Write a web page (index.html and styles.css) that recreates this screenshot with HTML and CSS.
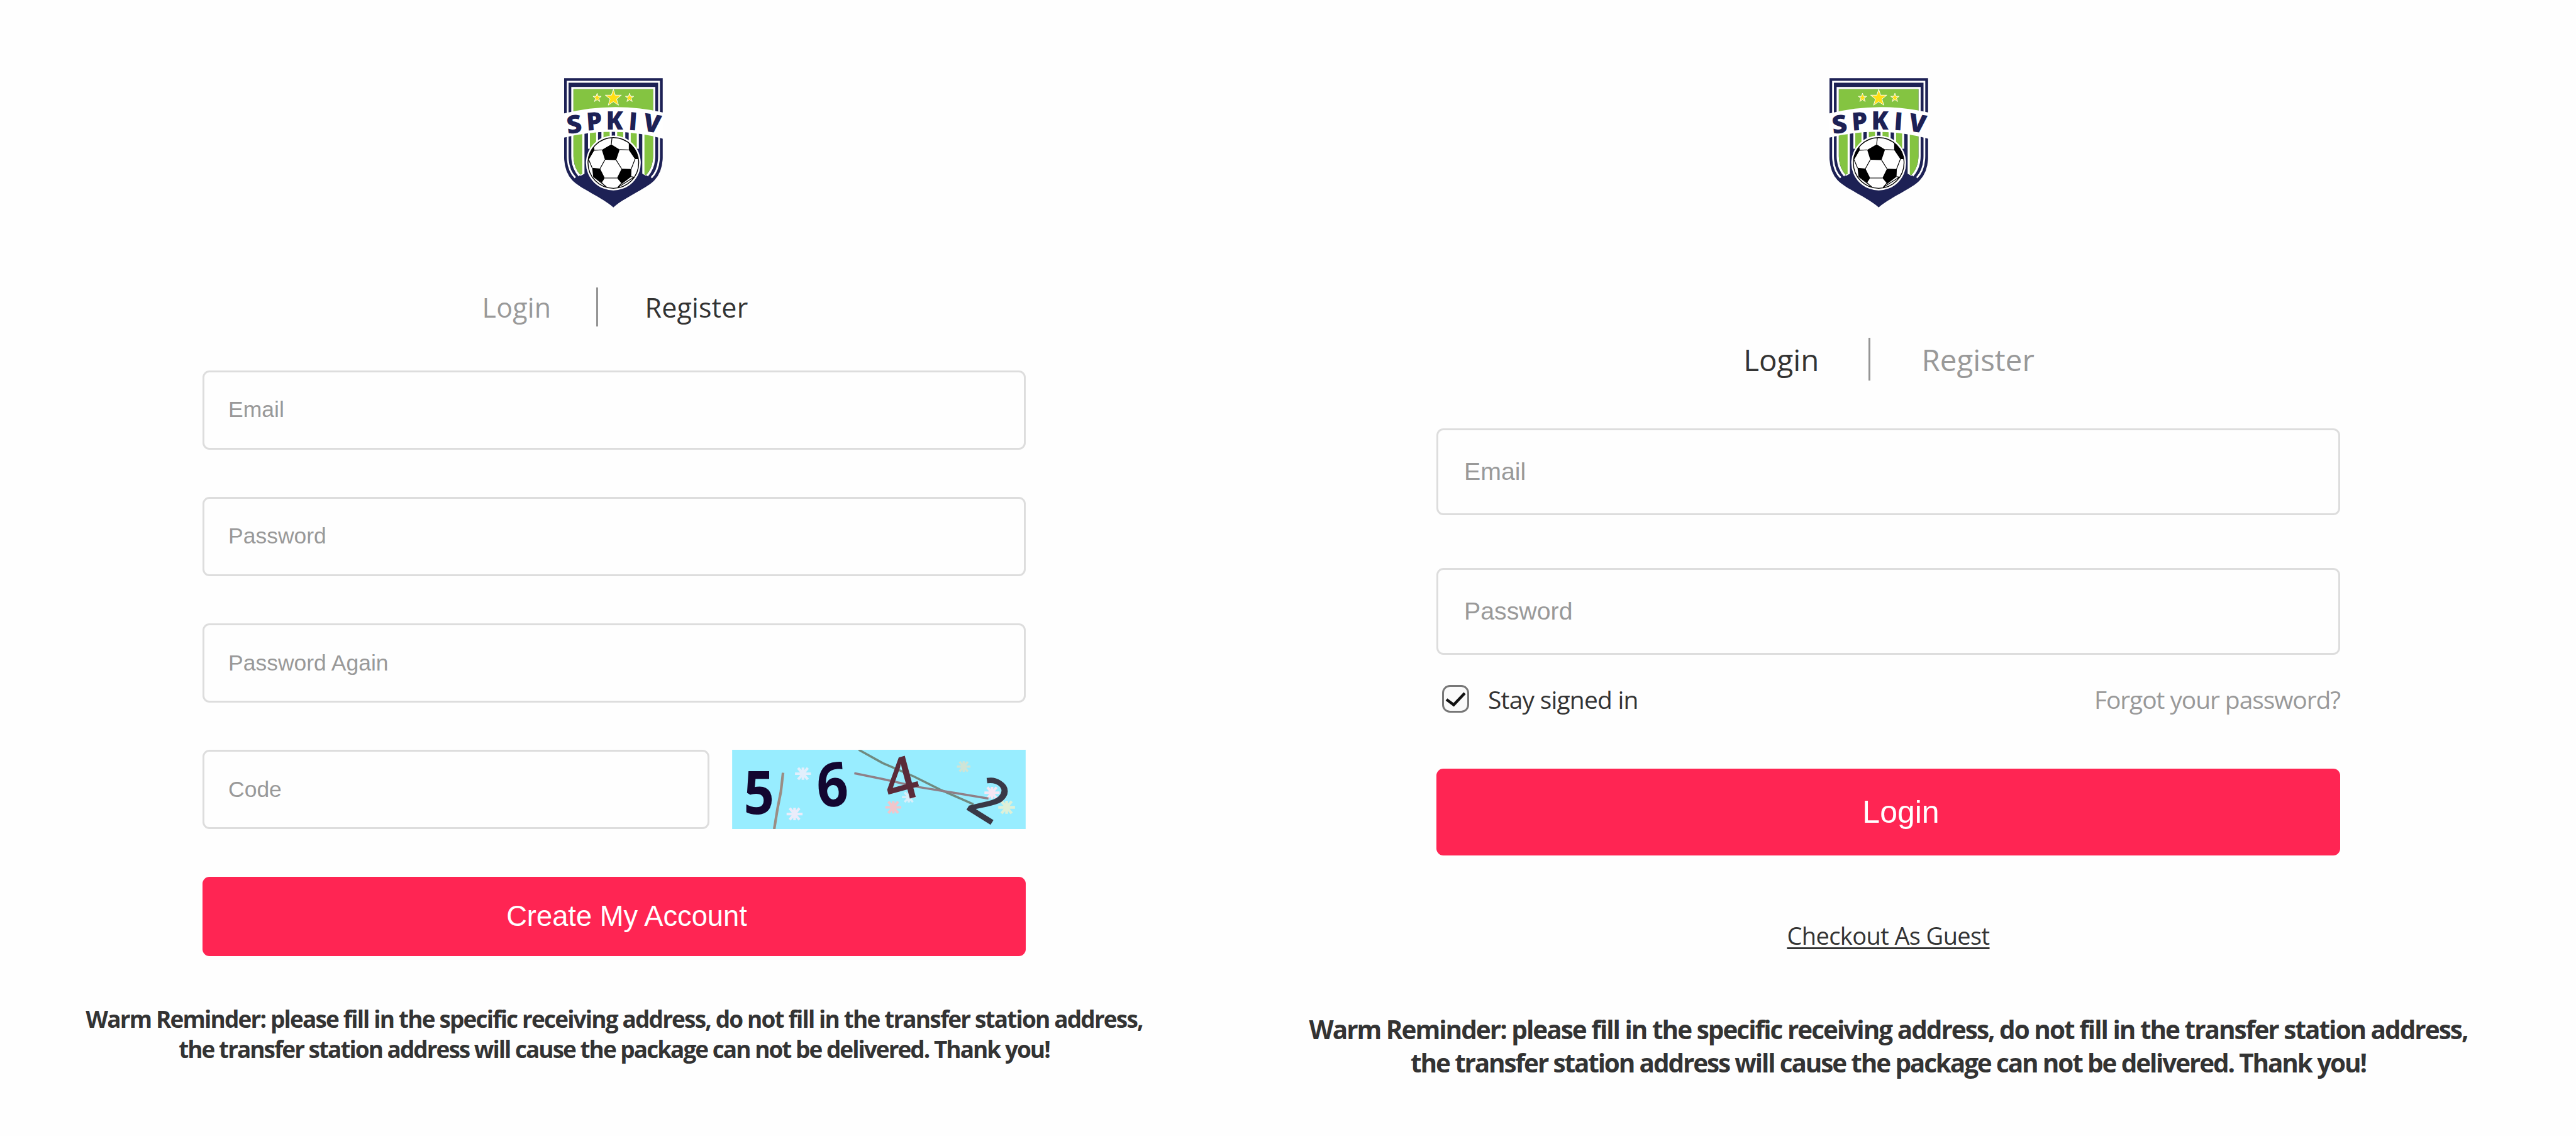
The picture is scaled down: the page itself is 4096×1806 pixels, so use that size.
FILE: index.html
```html
<!DOCTYPE html>
<html lang="en">
<head>
    <meta charset="UTF-8">
    <meta name="viewport" content="width=device-width, initial-scale=1.0">
    <title>SPKIV - Login / Register</title>
    <link rel="stylesheet" href="styles.css">
</head>
<body>
    <main class="page">
        <section class="panel register">
            <svg class="logo" viewBox="101 80 670 878">
                <!-- club badge, reused in the login panel -->
                <g id="badge">
                    <path fill="#1d2155" d="M101 80H770V620Q768 715 715 772C670 825 500 895 435 958C370 895 200 825 155 772Q103 715 101 620Z"/>
                    <g fill="none" stroke="#fff">
                        <path stroke-width="12" d="M177 756Q126 705 125 610V105H745V610Q744 705 693 756"/>
                        <path stroke-width="15" d="M205 742Q158 690 157 610V148H712V610Q711 690 664 742"/>
                    </g>
                    <path fill="#84c441" d="M164 155H705V610Q703 690 655 740L631 728V450H239V728L214 740Q166 690 164 610Z"/>
                    <path fill="#fff" d="M224 440H240V728L210 745V735L224 732ZM631 440H646V735L660 740V745L631 728Z"/>
                    <path fill="#1d2155" d="M240 440H631V728L560 780H310L240 728Z"/>
                    <path fill="#fff" d="M263 440H331V560H263ZM354 440H424V560H354ZM447 440H516V560H447ZM539 440H608V560H539Z"/>
                    <path fill="#84c441" d="M276 440H318V560H276ZM368 440H410V560H368ZM461 440H502V560H461ZM553 440H594V560H553Z"/>
                    <path fill="#fff" d="M96 321Q435 236 775 314V492Q435 400 96 485Z"/>
                    <g fill="#ffdf13" stroke="#fff" stroke-width="4">
                        <path d="M435 157L448 196L490 196L457 222L470 264L435 240L400 264L413 222L380 196L422 196Z"/>
                        <path d="M325 183L332 204L353 204L336 217L343 239L325 226L307 239L314 217L297 204L318 204Z"/>
                        <path d="M545 183L552 204L573 204L556 217L563 239L545 226L527 239L534 217L517 204L538 204Z"/>
                    </g>
                    <g class="badge-name">
                        <text transform="translate(124 459) rotate(-7) scale(1.06 1)">S</text>
                        <text transform="translate(256 437) rotate(-4)">P</text>
                        <text transform="translate(385 429)">K</text>
                        <text transform="translate(535 432) rotate(4)">I</text>
                        <text transform="translate(631 437) rotate(9)">V</text>
                    </g>
                    <circle cx="435" cy="656" r="186" fill="#fff"/>
                    <clipPath id="ball"><circle cx="435" cy="656" r="172"/></clipPath>
                    <g clip-path="url(#ball)">
                        <path d="M421 530L478 565L454 636L378 634L357 567ZM300 530L307 568L268 634L255 640V560ZM540 518L610 560V630H582L540 568ZM291 689L345 694L377 758L356 790L298 748ZM491 695L558 697L556 749L493 797L460 758Z"/>
                        <path fill="none" stroke="#000" stroke-width="5" d="M426 484L421 530M357 567L305 570M478 565L540 567M454 636L491 695M378 634L345 694M377 758H460M582 630L556 697M268 634L291 689M356 790L388 822M298 748L388 818M493 790L465 822M556 749L576 752M465 822L576 752"/>
                    </g>
                    <circle cx="435" cy="656" r="172" fill="none" stroke="#000" stroke-width="6"/>
                </g>
            </svg>
            <nav class="tabs">
                <a>Login</a>
                <i class="divider"></i>
                <a class="active">Register</a>
            </nav>
            <form class="form">
                <input type="text" placeholder="Email">
                <input type="text" placeholder="Password">
                <input type="text" placeholder="Password Again">
                <div class="code-row">
                    <input type="text" placeholder="Code">
                    <svg class="captcha" viewBox="0 0 663 179">
                        <symbol id="flake" viewBox="-20 -20 40 40">
                            <path fill="none" stroke="currentColor" stroke-width="6" d="M0 -14V14M-18 0H18M-11 -13L11 13M11 -13L-11 13"/>
                        </symbol>
                        <rect width="663" height="179" fill="#98edff"/>
                        <g class="flakes">
                            <use href="#flake" x="140" y="34" width="40" height="40" color="#e2effc"/>
                            <use href="#flake" x="121" y="125" width="40" height="40" color="#ebecfa"/>
                            <use href="#flake" x="344" y="110" width="40" height="40" color="#f0c6cb"/>
                            <use href="#flake" x="506" y="19" width="34" height="38" color="#cfe4d6"/>
                            <use href="#flake" x="568" y="78" width="38" height="38" color="#f5e6f3"/>
                            <use href="#flake" x="599" y="109" width="42" height="42" color="#def0d8"/>
                            <use href="#flake" x="382" y="88" width="34" height="38" color="#d8effa"/>
                        </g>
                        <g fill="none" stroke-width="5">
                            <path stroke="#6f8a80" d="M286 0L340 30L410 60L470 90L545 123"/>
                            <path stroke="#8f7f87" d="M276 53L340 66L420 84L500 97L579 110"/>
                            <path stroke="#9a8d84" stroke-width="6" d="M115 52L110 95L103 130L95 179"/>
                        </g>
                        <text class="digit" transform="translate(26 145) scale(0.9 1)" fill="#130630">5</text>
                        <text class="digit" transform="translate(194 130) rotate(-4) scale(0.93 1.03)" fill="#130630">6</text>
                        <text class="digit thin" transform="translate(356 122) rotate(-15)" fill="#5a2b3a">4</text>
                        <text class="digit thin" transform="translate(524 132) rotate(32)" fill="#393846">2</text>
                    </svg>
                </div>
                <button type="button">Create My Account</button>
            </form>
            <p class="reminder">Warm Reminder: please fill in the specific receiving address, do not fill in the transfer station address,<br><span class="last">the transfer station address will cause the package can not be delivered. Thank you!</span></p>
        </section>

        <section class="panel login">
            <svg class="logo" viewBox="101 80 670 878"><use href="#badge"/></svg>
            <nav class="tabs">
                <a class="active">Login</a>
                <i class="divider"></i>
                <a>Register</a>
            </nav>
            <form class="form">
                <input type="text" placeholder="Email">
                <input type="text" placeholder="Password">
                <div class="options">
                    <svg class="check" viewBox="0 0 43 46">
                        <rect x="1.5" y="2.5" width="40" height="41" rx="11" fill="#fafafa" stroke="#777" stroke-width="3"/>
                        <path fill="none" stroke="#111" stroke-width="4.5" d="M7 24L18.5 32.5L36 14"/>
                    </svg>
                    <span class="stay">Stay signed in</span>
                    <a class="forgot">Forgot your password?</a>
                </div>
                <button type="button">Login</button>
            </form>
            <a class="guest">Checkout As Guest</a>
            <p class="reminder">Warm Reminder: please fill in the specific receiving address, do not fill in the transfer station address,<br><span class="last">the transfer station address will cause the package can not be delivered. Thank you!</span></p>
        </section>
    </main>
</body>
</html>
```
FILE: styles.css
```css
* {
    box-sizing: border-box;
}
body {
    margin: 0;
    background-color: #fefefe;
    font-family: "Open Sans", "Noto Sans", sans-serif;
    color: #333;
}
.page {
    display: grid;
    grid-template-columns: 1953px 2099px;
    width: 4096px;
    height: 1806px;
    overflow: hidden;
}
.panel {
    display: flex;
    flex-direction: column;
    align-items: center;
    padding-top: 124px;
}
.logo {
    width: 157px;
    height: 206px;
    flex: none;
    overflow: visible;
}
.badge-name {
    font-family: "Open Sans", sans-serif;
    font-weight: 800;
    font-size: 170px;
    fill: #1d2155;
}
.tabs {
    display: flex;
    align-items: flex-start;
    color: #999;
    white-space: nowrap;
}
.tabs .active {
    color: #333;
}
.divider {
    width: 3px;
    background-color: #959595;
}
.form {
    display: flex;
    flex-direction: column;
}
input {
    display: block;
    width: 100%;
    margin: 0;
    border: 3px solid #ddd;
    border-radius: 11px;
    background-color: #fefefe;
    font-family: "Liberation Sans", Arial, sans-serif;
    color: #333;
}
input::placeholder {
    color: #999;
    opacity: 1;
}
button {
    width: 100%;
    padding: 0 0 0 40px;
    border: none;
    border-radius: 11px;
    background-color: #ff2553;
    color: #fff;
    font-family: "Liberation Sans", Arial, sans-serif;
}
.reminder {
    margin: 0;
    text-align: center;
    font-weight: 700;
    white-space: nowrap;
}

/* register */
.register .logo {
    margin-right: 3px;
}
.register .tabs {
    margin-top: 126.5px;
    margin-left: 3px;
    height: 62px;
    gap: 74px;
    font-size: 43px;
    line-height: 64px;
    letter-spacing: 0.2px;
}
.register .divider {
    height: 62px;
    margin-left: -2px;
}
.register .form {
    width: 1309px;
    margin-top: 70px;
    gap: 75.3px;
}
.register input {
    height: 126px;
    padding: 0 38px;
    font-size: 35.5px;
}
.code-row {
    display: flex;
    gap: 36px;
}
.code-row input {
    width: 806px;
}
.captcha {
    width: 467px;
    height: 126px;
    flex: none;
}
.digit {
    font-family: "Noto Sans", sans-serif;
    font-weight: 700;
    font-size: 134px;
}
.digit.thin {
    font-weight: 500;
}
.register button {
    height: 126px;
    font-size: 45.3px;
}
.register .reminder {
    margin-top: 76px;
    font-size: 37px;
    line-height: 48.4px;
    letter-spacing: -1.85px;
}
.register .last {
    letter-spacing: -2px;
}

/* login */
.login .logo {
    margin-right: 31px;
}
.login .tabs {
    margin-top: 207px;
    margin-left: 2px;
    height: 68px;
    gap: 81px;
    font-size: 47.5px;
    line-height: 70px;
}
.login .divider {
    height: 68px;
    margin-left: -2px;
}
.login .form {
    width: 1437px;
    margin-top: 76px;
}
.login input {
    height: 138px;
    margin-bottom: 84px;
    padding: 0 41px 2px;
    font-size: 39.3px;
}
.options {
    display: flex;
    align-items: center;
    height: 60px;
    margin-top: -44px;
    padding-left: 9px;
    font-size: 39px;
}
.check {
    width: 43px;
    height: 46px;
}
.stay {
    margin-left: 30px;
    letter-spacing: -0.8px;
}
.forgot {
    margin-left: auto;
    color: #999;
    letter-spacing: -1.1px;
}
.login button {
    height: 138px;
    margin-top: 81px;
    font-size: 50px;
}
.guest {
    margin-top: 101px;
    font-size: 38px;
    line-height: 52px;
    letter-spacing: -0.6px;
    text-decoration: underline;
    text-decoration-thickness: 3px;
    text-underline-offset: 4px;
}
.login .reminder {
    margin-top: 97px;
    font-size: 40.5px;
    line-height: 53px;
    letter-spacing: -2px;
}
.login .last {
    letter-spacing: -2.15px;
}
```
